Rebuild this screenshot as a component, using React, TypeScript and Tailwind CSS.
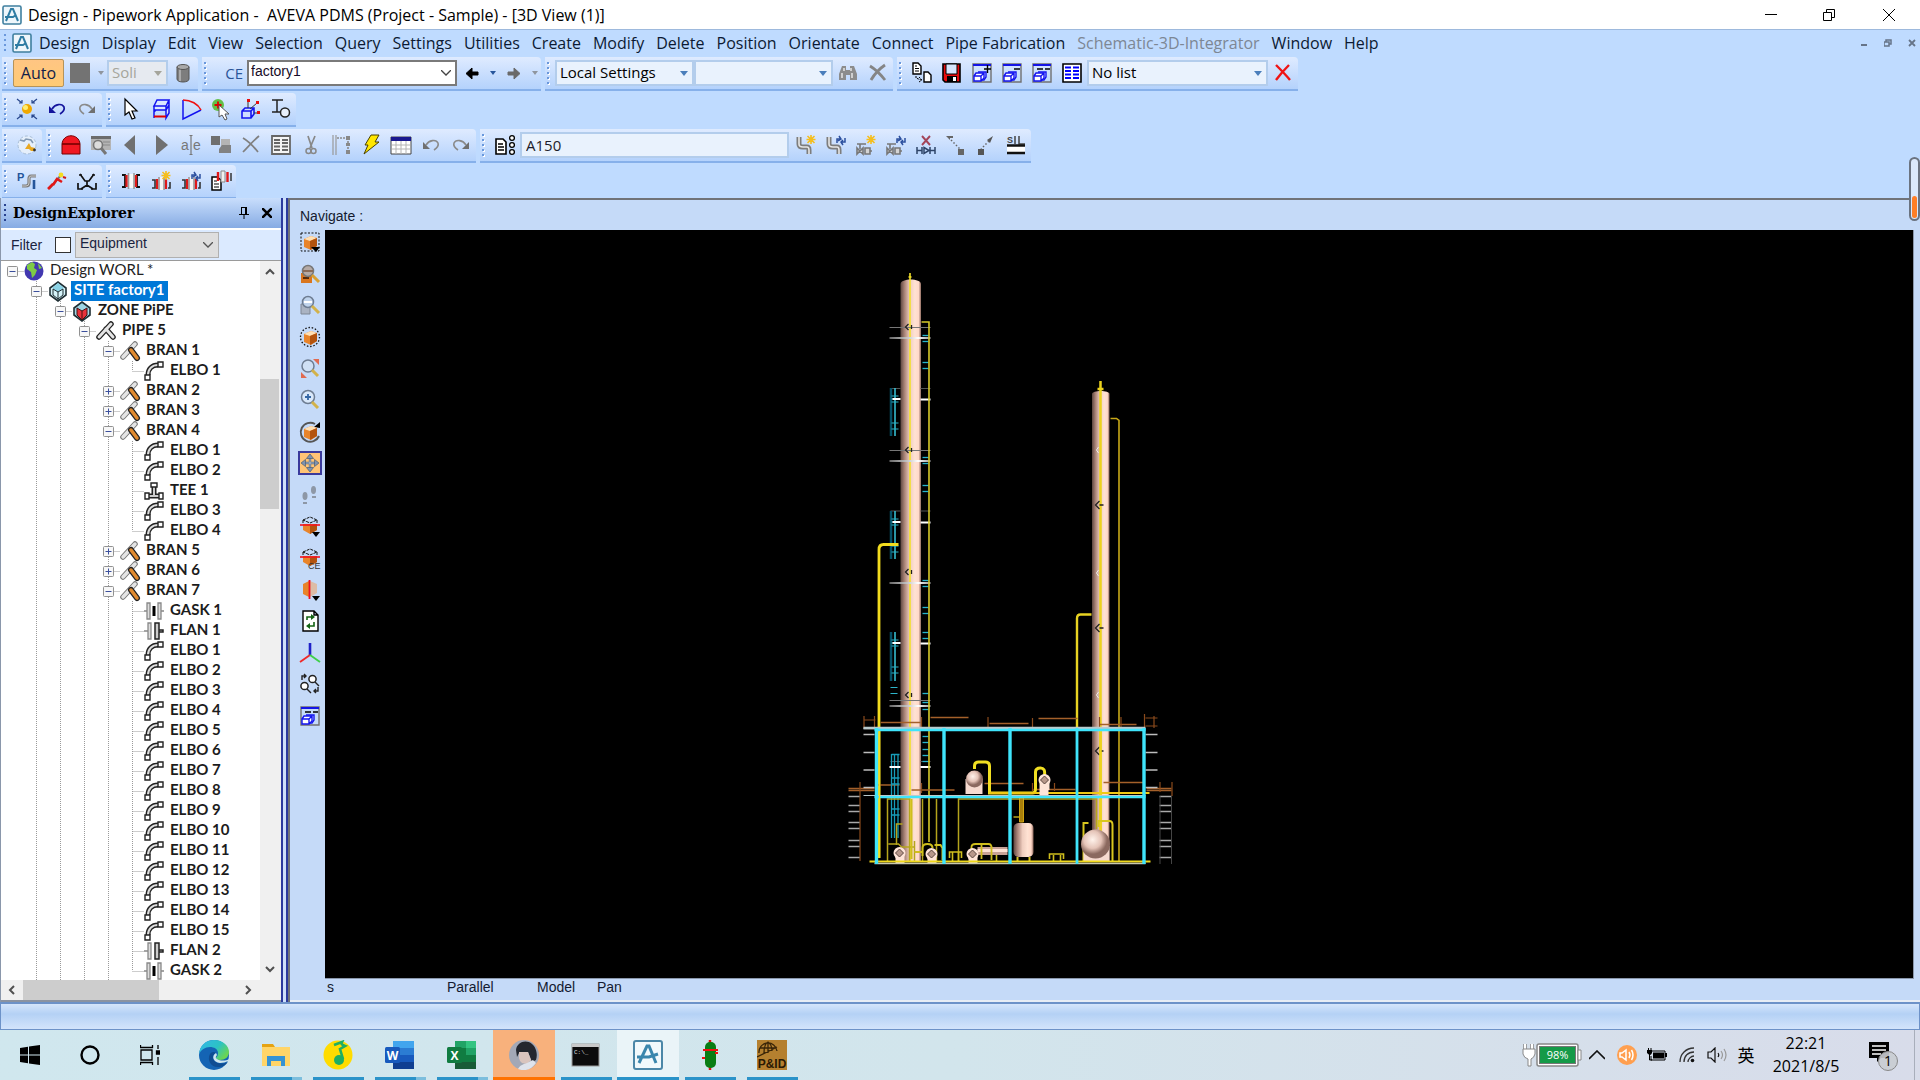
import type { ReactNode } from 'react';

type IconProps = {
  name: string;
  size?: 'sm' | 'md';
};

const cube = (
  <>
    <path d="M4 7l7-3 6 2v8l-6 4-7-3z" fill="#e8842a" />
    <path d="M4 7l7-3 6 2-7 3z" fill="#ffe0b5" />
    <path d="M10 9l7-3v8l-7 4z" fill="#b3530e" />
  </>
);

const halfCube = (
  <>
    <path d="M3 4l7-3 7 3-7 3zM3 4v4M17 4v4" stroke="#111" strokeDasharray="3 1" />
    <path d="M3 8h14v6l-7 4-7-4z" fill="#e8842a" />
    <path d="M10 10l7-2v6l-7 4z" fill="#b3530e" />
    <path d="M0 9h20" stroke="#f01020" strokeWidth="1.600" />
  </>
);

const spark = <path d="M15 0v9M10.500 4.500h9M11.500 1l7 7M18.500 1l-7 7" stroke="#f6be1c" strokeWidth="1.600" />;

const cycle = (
  <path d="M11 8V4h3M13 1l2 3-3 2M19 3v4h-4M17 10l-2-3 2-2" stroke="#2b4f9e" strokeWidth="1.500" />
);

const elbowPipe = (
  <>
    <path d="M3 2v7q0 3 4 3h4q2 0 2 3v4" stroke="#7d7d7d" strokeWidth="5" />
    <path d="M3 2v7q0 3 4 3h4q2 0 2 3v4" stroke="#e6e6e6" strokeWidth="1.600" />
  </>
);

const valve = (
  <>
    <path d="M1 13l6 6v-6l-6 6zM9 13h5v6H9z" fill="#d4d4d4" stroke="#777" strokeWidth="1.600" />
    <path d="M14 16h2M4 14V9M1 9h9" stroke="#777" strokeWidth="1.600" />
  </>
);

const drawlist = (
  <>
    <path d="M1 1h18v18H1z" stroke="#707070" strokeWidth="1.400" />
    <path d="M1 2h18" stroke="#1414e6" strokeWidth="2" />
    <path d="M6 9h8v5l-2 3H9" fill="#dce8ff" stroke="#1414f0" strokeWidth="1.400" />
    <path d="M2 13h7v5H2zM2 13l2-3h8v5l-3 3M9 13l3-3" fill="#fff" stroke="#1414f0" strokeWidth="1.400" />
  </>
);

const flange = (
  <>
    <path d="M8 6h5v13H8z" fill="#f4f4f4" />
    <path d="M8 6v13M13 6v13" stroke="#999" strokeWidth="1.600" />
    <path d="M6 8v10M15 8v10" stroke="#e01818" strokeWidth="2.200" />
    <path d="M1 9h3v8H1M19 11v6h-2" stroke="#333" strokeWidth="1.600" />
  </>
);

// All toolbar drawings share a 20x20 box
const icons: Record<string, ReactNode> = {
  aveva: (
    <>
      <rect x="1" y="1" width="18" height="18" rx="1.500" fill="#eef6fb" stroke="#3f7f9f" strokeWidth="1.600" />
      <path d="M4 16 9 4h2l5 12M3 12h8l3-2" stroke="#2f7ca3" strokeWidth="2" />
    </>
  ),
  square: <path d="M0 0h20v20H0z" fill="#737373" />,
  cylinder: (
    <>
      <path d="M4 4v12c0 4 12 4 12 0V4z" fill="#7d7d7d" stroke="#555" />
      <path d="M7 6v12" stroke="#aaa" strokeWidth="2" />
      <ellipse cx="10" cy="4" rx="6" ry="2.500" fill="#a8a8a8" stroke="#555" />
    </>
  ),
  back: <path d="M4 10.500 10 5v4h6v3h-6v4z" fill="#000" stroke="#000" />,
  forward: <path d="M16 10.500 10 5v4H4v3h6v4z" fill="#6a6a6a" stroke="#6a6a6a" />,
  binoculars: (
    <>
      <path d="M1 17V11l3-8h4v4h4V3h4l3 8v6h-7v-5H8v5z" fill="#8c8c8c" />
      <path d="M4 10v5M14 10v5M6 5v3M13 5v3" stroke="#e0e0e0" strokeWidth="1.600" />
    </>
  ),
  grayX: <path d="M2 3c5 3 11 9 15 14M17 2C11 6 6 12 3 17" stroke="#858585" strokeWidth="2.800" />,
  thinX: <path d="M2 3c5 3 11 9 15 14M18 1C12 6 7 12 2 17" stroke="#808080" strokeWidth="1.700" />,
  redX: <path d="M3 2c4 4 10 10 14 15M16 2C11 7 6 13 3 17" stroke="#f01414" strokeWidth="2.400" />,
  docCopy: (
    <>
      <path d="M1 0h5l3 3v8H1zM12 9h4l3 3v7h-7z" fill="#fff" stroke="#000" strokeWidth="1.400" />
      <path d="M3 3h2M3 5.500h4M3 8h4" stroke="#000" />
      <path d="M4 13v2l5 2M7 14l3 3-3 2" stroke="#000" strokeDasharray="2 1" />
    </>
  ),
  save: (
    <>
      <path d="M1 1h17v18H3l-2-2z" fill="#e80c0c" stroke="#000" strokeWidth="1.600" />
      <path d="M4 1h11v10H4z" fill="#d5e5fb" stroke="#000" />
      <path d="M5 13h10v6H5z" fill="#000" />
      <path d="M11 14h3v4h-3z" fill="#fff" />
    </>
  ),
  listAdd: (
    <>
      {drawlist}
      <path d="M12 6h7M15.500 2v8" stroke="#000" strokeWidth="1.400" />
    </>
  ),
  listRemove: (
    <>
      {drawlist}
      <path d="M12 6h6" stroke="#000" strokeWidth="1.500" />
    </>
  ),
  listClear: (
    <>
      {drawlist}
      <path d="M5 6h6M13 6h5" stroke="#000" strokeWidth="1.500" />
    </>
  ),
  listTable: (
    <>
      <path d="M1 1h18v18H1z" fill="#fff" stroke="#000" strokeWidth="1.600" />
      <path d="M3 4.500h6M11 4.500h6M3 8h6M11 8h6M3 11.500h6M11 11.500h6M3 15h6M11 15h6" stroke="#00f" strokeWidth="2.200" />
    </>
  ),
  target: (
    <>
      <circle cx="10" cy="10" r="5" fill="#f0a800" />
      <circle cx="8.500" cy="8.500" r="2.500" fill="#ffee70" />
      <path d="M0 0l5 4M5 1v3H2M20 0l-5 4M15 1v3h3M0 20l5-4M2 16h3v3M20 20l-5-4M18 16h-3v3" stroke="#27468c" strokeWidth="1.200" />
    </>
  ),
  undo: (
    <>
      <path d="M5 10C8 5 15 4 17 8c1 3-1 5-4 7" stroke="#14149c" strokeWidth="1.700" />
      <path d="M2 7v7h7z" fill="#14149c" />
    </>
  ),
  redo: (
    <>
      <path d="M15 10C12 5 5 4 3 8c-1 3 1 5 4 7" stroke="#8a8a8a" strokeWidth="1.600" />
      <path d="M18 7v7h-7z" fill="#707070" />
    </>
  ),
  undoGray: (
    <>
      <path d="M5 10C8 5 15 4 17 8c1 3-1 5-4 7" stroke="#8a8a8a" strokeWidth="1.600" />
      <path d="M2 7v7h7z" fill="#707070" />
    </>
  ),
  cursor: <path d="M4 0v16l4-3 3 7 3-1-3-7h5z" fill="#fff" stroke="#000" strokeWidth="1.200" />,
  box3d: (
    <>
      <path d="M3 7l3-6h12l-3 6zM3 7h12v4H3zM15 11l3-5V1M3 11v8M15 11v8l3-5V6M3 13l2-2" fill="#dbe8ff" stroke="#1414f0" strokeWidth="1.500" />
      <path d="M3 17.500h12" stroke="#e00000" strokeWidth="2" />
    </>
  ),
  sector: (
    <>
      <path d="M2 1v19l18-9" stroke="#1414f0" strokeWidth="1.500" />
      <path d="M2 1c8 0 15 4 18 10" stroke="#f01010" strokeWidth="1.600" />
    </>
  ),
  cursorAdd: (
    <>
      <circle cx="7" cy="6" r="6" fill="#62c048" />
      <path d="M3.500 6h7M7 2.500v7" stroke="#e00000" strokeWidth="1.800" />
      <path d="M8 6v12l3-2 3 5 2-1-2-5h4z" fill="#fff" stroke="#555" />
    </>
  ),
  axisBox: (
    <>
      <path d="M1 12l3-3h9v6l-3 4H1zM1 12h9v7M10 12l3-3" fill="#cfdcff" stroke="#1414f0" strokeWidth="1.600" />
      <path d="M7 9V2M9 10l7-6M13 14h5M10 16" stroke="#333" />
      <path d="M6 0h3v3H6zM15 2h3v3h-3zM16 12h3v3h-3z" fill="#e80c0c" />
    </>
  ),
  measure: (
    <>
      <path d="M1 1h11M6 1v12M1 13h9" stroke="#222" strokeWidth="1.500" />
      <circle cx="14" cy="13.500" r="4.500" fill="#e8f0fc" stroke="#222" strokeWidth="1.500" />
    </>
  ),
  globe: (
    <>
      <circle cx="10" cy="10" r="9" fill="#e5effb" stroke="#a9bed6" strokeDasharray="3 2" />
      <path d="M3 5l4 1 2-2 5 1 2 3" stroke="#8299b3" strokeWidth="1.600" />
      <path d="M8 14l4-6 2 4 4 1v3h-4l-2-2z" fill="#e9a820" />
      <circle cx="17.500" cy="15" r="1.400" fill="#333" />
    </>
  ),
  helmet: (
    <>
      <path d="M1 19V9C2-2 18-2 19 9v10z" fill="#f01822" stroke="#700" />
      <path d="M1 9h18" stroke="#700" strokeWidth="1.600" />
    </>
  ),
  search: (
    <>
      <path d="M0 1h20v14H0z" fill="#b4b4b4" />
      <path d="M0 2.500h20" stroke="#6c6c6c" strokeWidth="3" />
      <path d="M12 7h7M12 10h7" stroke="#8a8a8a" />
      <circle cx="7" cy="10" r="4.500" fill="#dcdcdc" stroke="#777" strokeWidth="1.600" />
      <path d="M10 13l5 6" stroke="#777" strokeWidth="3" />
    </>
  ),
  prev: <path d="M14 0v20L3 10z" fill="#707070" />,
  next: <path d="M5 0v20l12-10z" fill="#707070" />,
  rename: (
    <>
      <text x="0" y="15" fontSize="14" fill="#777" textAnchor="start" fontFamily="Liberation Sans">a</text>
      <text x="12" y="15" fontSize="14" fill="#777" fontFamily="Liberation Sans">e</text>
      <path d="M10 1v18M8.500 .5h3M8.500 19.500h3" stroke="#777" strokeWidth="1.200" />
    </>
  ),
  blocks: (
    <>
      <path d="M10 4h9v8h-9z" fill="#b4b4b4" />
      <path d="M0 1h9v9H0z" fill="#6f6f6f" />
      <path d="M11 10h9v8H8v-4z" fill="#828282" />
    </>
  ),
  list: (
    <>
      <path d="M1 1h18v18H1z" fill="#f4f4f4" stroke="#666" strokeWidth="1.800" />
      <path d="M3 5h6M11 5h6M3 8h6M11 8h6M3 11.500h6M11 11.500h6M3 15h6M11 15h6" stroke="#666" strokeWidth="2" />
    </>
  ),
  cut: (
    <>
      <path d="M7 1l4 12M14 1L9 13" stroke="#888" strokeWidth="1.700" />
      <circle cx="7.500" cy="16" r="2.500" stroke="#888" strokeWidth="1.500" />
      <circle cx="12.500" cy="16" r="2.500" stroke="#888" strokeWidth="1.500" />
    </>
  ),
  nodes: (
    <>
      <path d="M2 0v20M5 0v20" stroke="#999" strokeWidth="1.200" />
      <path d="M6 3h9M17 3v16" stroke="#8a8a8a" strokeWidth="1.600" strokeDasharray="2 1" />
      <path d="M15 1h4v4h-4zM15 8h4v3h-4zM15 15h4v4h-4z" fill="#888" />
    </>
  ),
  bolt: <path d="M10 0h8l-4 7h4L3 19l4-9H4z" fill="#ffe600" stroke="#4a4100" />,
  calendar: (
    <>
      <path d="M0 2h20v17H0z" fill="#fff" stroke="#444" />
      <path d="M0 2h20v4H0z" fill="#18188f" />
      <path d="M1 10h18M1 14h18M5 6v13M10 6v13M15 6v13" stroke="#b4b4b4" />
    </>
  ),
  docChain: (
    <>
      <path d="M1 4h7l3 3v12H1z" fill="#fff" stroke="#000" strokeWidth="1.600" />
      <path d="M3 9h5M3 12h6M3 15h6" stroke="#000" strokeWidth="1.300" />
      <circle cx="17" cy="3" r="2.400" fill="#fff" stroke="#000" strokeWidth="1.300" />
      <circle cx="17" cy="10" r="2.400" fill="#fff" stroke="#000" strokeWidth="1.300" />
      <circle cx="17" cy="17" r="2.400" fill="#fff" stroke="#000" strokeWidth="1.300" />
    </>
  ),
  pipeNew: <>{elbowPipe}{spark}</>,
  pipeCycle: <>{elbowPipe}{cycle}</>,
  valveNew: <>{valve}{spark}</>,
  valveCycle: <>{valve}{cycle}</>,
  valveDelete: (
    <>
      <path d="M6 1l8 9M14 1l-8 9" stroke="#a34458" strokeWidth="1.900" />
      <path d="M1 12v7M19 12v7M1 15.500h5M14 15.500h5M6 12v7M14 12v7M8 12.500l5 3-5 3z" stroke="#2e4468" strokeWidth="1.500" />
    </>
  ),
  routeDown: (
    <>
      <path d="M0 1h7v2H4v2zM12 14h6v6h-6z" fill="#666" />
      <path d="M5 5l9 9" stroke="#666" strokeWidth="1.500" strokeDasharray="1.500 2" />
    </>
  ),
  routeUp: (
    <>
      <path d="M17 1l-6 4 3 3zM2 14h6v6H2z" fill="#555" />
      <path d="M13 6l-8 8" stroke="#666" strokeWidth="1.500" strokeDasharray="1.500 2" />
    </>
  ),
  slope: (
    <>
      <text x="1" y="8" fontSize="9" fontWeight="bold" fill="#444" fontFamily="Liberation Sans">S</text>
      <path d="M9 1v8M13 1v8h6" stroke="#444" strokeWidth="1.500" />
      <path d="M1 11h18v7H1z" fill="#fff" />
      <path d="M1 10.500h18M1 18h18" stroke="#111" strokeWidth="2.400" />
    </>
  ),
  pipePi: (
    <>
      <text x="0" y="10" fontSize="11" fontWeight="bold" fill="#24559a" fontFamily="Liberation Sans">P</text>
      <path d="M19 5h-5q-2 0-2 3v4q0 3-3 3H5" stroke="#7d7d7d" strokeWidth="3.200" />
      <path d="M19 5h-5q-2 0-2 3v4q0 3-3 3H5" stroke="#c9c9c9" />
      <path d="M17 9v9" stroke="#24559a" strokeWidth="2.600" />
    </>
  ),
  redPen: (
    <>
      <path d="M2 18L15 3" stroke="#777" strokeWidth="2" />
      <path d="M1 18l5-5M6 14l4-6 5 3" stroke="#e01818" strokeWidth="2.600" />
      <circle cx="14" cy="4" r="2.400" fill="#f3dc20" />
      <path d="M16 6l3 1" stroke="#d01818" strokeWidth="2" />
    </>
  ),
  trim: (
    <>
      <path d="M3 3l5 7h4l5-7M2 4h3M15 4h3M10 10v4M4 18l6-4 6 4" stroke="#111" strokeWidth="1.700" />
      <path d="M1 12v6h5M19 12v6h-5" stroke="#111" strokeWidth="1.700" />
    </>
  ),
  flange: (
    <>
      <path d="M1 4h3v12H1M19 4h-3v12h3" stroke="#111" strokeWidth="1.800" />
      <path d="M8 3h5v14H8z" fill="#f8f8f8" />
      <path d="M7.500 2v16M13 2v16" stroke="#999" strokeWidth="1.600" />
      <path d="M5.500 4v12M15 4v12" stroke="#e01818" strokeWidth="2.200" />
    </>
  ),
  flangeNew: <>{flange}{spark}</>,
  flangeCycle: <>{flange}{cycle}</>,
  flangeDoc: (
    <>
      <path d="M1 6h5l4 3v10H1z" fill="#fff" stroke="#000" strokeWidth="1.500" />
      <path d="M3 10h3M3 13h5M3 16h5" stroke="#000" />
      <path d="M10 0h4v11h-4z" fill="#f0f0f0" stroke="#888" />
      <path d="M7 1v9M16.500 1v10" stroke="#e01818" strokeWidth="2.400" />
      <path d="M20 2v8" stroke="#333" strokeWidth="1.500" />
    </>
  ),
  cubeSelect: (
    <>
      <path d="M1 1h18v18H1z" stroke="#111" strokeDasharray="2 1.500" />
      {cube}
      <path d="M11 15h9l-4 5z" fill="#000" />
    </>
  ),
  zoomBox: (
    <>
      <path d="M1 9h11v10H1z" fill="#d9761f" />
      <path d="M3 14h6" stroke="#5a2a08" strokeWidth="2" />
      <circle cx="8" cy="7" r="5.500" fill="#b5aaa5" stroke="#777" strokeWidth="1.500" />
      <path d="M3 7h10" stroke="#8a6b58" strokeWidth="2" />
      <path d="M12 11l7 7" stroke="#d8a033" strokeWidth="3" />
    </>
  ),
  zoomItem: (
    <>
      <path d="M1 9h9v10H1z" fill="#aab3c2" stroke="#7f8795" />
      <circle cx="8" cy="7" r="5.500" fill="#bfd3ec" stroke="#6e7d92" strokeWidth="1.500" />
      <path d="M4 7h8" stroke="#fff" strokeWidth="2" />
      <path d="M12 11l7 7" stroke="#d2b24a" strokeWidth="3" />
    </>
  ),
  cubeRound: (
    <>
      <circle cx="10" cy="10" r="9.500" stroke="#111" strokeWidth="1.300" strokeDasharray="1.500 1.800" />
      {cube}
    </>
  ),
  zoomExtents: (
    <>
      <circle cx="8" cy="8" r="6" fill="#cfe0f5" stroke="#6e7d92" strokeWidth="1.500" />
      <path d="M12 12l6 6" stroke="#d2b24a" strokeWidth="3" />
      <path d="M13 1h6v6zM1 14v6h6z" fill="#e06a50" />
    </>
  ),
  zoomIn: (
    <>
      <circle cx="8" cy="7" r="6.500" fill="#d9e8fa" stroke="#6e7d92" strokeWidth="1.500" />
      <path d="M5 7h6M8 4v6" stroke="#3567a5" strokeWidth="1.800" />
      <path d="M12 12l6 6" stroke="#d2b24a" strokeWidth="3" />
    </>
  ),
  rotate: (
    <>
      <path d="M15 2A9.500 9.500 0 1 0 19 14" stroke="#555" strokeWidth="2" />
      <path d="M14 5l6-5v6z" fill="#000" />
      {cube}
    </>
  ),
  pan: (
    <>
      <path d="M10 2v16M2 10h16" stroke="#55677f" strokeWidth="2.600" />
      <path d="M10 2v16M2 10h16" stroke="#c9d6e6" strokeWidth=".8" />
      <path d="M10 0l4 5H6zM10 20l4-5H6zM0 10l5-4v8zM20 10l-5-4v8z" fill="#7d93b0" stroke="#44546a" strokeWidth=".7" />
    </>
  ),
  walk: (
    <>
      <ellipse cx="5" cy="11" rx="2.500" ry="4" fill="#8d97a6" />
      <ellipse cx="13.500" cy="5" rx="2.500" ry="4" fill="#8d97a6" />
      <path d="M3 17h4v2H3zM12 11h4v2h-4z" fill="#8d97a6" />
    </>
  ),
  clip: (
    <>
      {halfCube}
      <path d="M12 16h8l-4 5z" fill="#000" />
    </>
  ),
  clipCe: (
    <>
      {halfCube}
      <text x="8" y="21" fontSize="9" fill="#333" fontFamily="Liberation Sans">CE</text>
    </>
  ),
  clipSide: (
    <>
      <path d="M3 4l6-3v16l-6-3z" fill="#e8842a" />
      <path d="M10 1l7 3v9l-7 4z" fill="#dcbca6" />
      <path d="M9.500 0v19" stroke="#f01020" strokeWidth="1.800" />
      <path d="M12 16h8l-4 5z" fill="#000" />
    </>
  ),
  refresh: (
    <>
      <path d="M3 0h11l4 4v16H3zM14 0v4h4" fill="#fff" stroke="#000" strokeWidth="1.400" />
      <path d="M7 9V6h4M14 11v4h-4" stroke="#146414" strokeWidth="1.600" />
      <path d="M11 3l4 3-4 3zM10 12l-4 3 4 3z" fill="#146414" />
    </>
  ),
  axes: (
    <>
      <path d="M10 12V0" stroke="#2020c8" strokeWidth="2.600" />
      <path d="M10 12L0 19" stroke="#f02828" strokeWidth="1.900" />
      <path d="M10 12l10 7" stroke="#3fcf4a" strokeWidth="1.900" />
    </>
  ),
  zoomCycle: (
    <>
      <circle cx="12.500" cy="5" r="3.600" fill="#fff" stroke="#222" strokeWidth="1.500" />
      <circle cx="4.500" cy="12" r="3.600" fill="#fff" stroke="#222" strokeWidth="1.500" />
      <path d="M15 8l4 4M7 15l4 4M2 6V2h4M4 0l2 2-2 2M18 13v4h-4M16 15l-2 2 2 2" stroke="#222" strokeWidth="1.400" />
    </>
  ),
  world: (
    <>
      <circle cx="10" cy="10" r="9.500" fill="#4238b0" />
      <path d="M3 4l5-3 3 2-1 4 3 2-2 5-3 3-1-6-4-3z" fill="#7ecb45" />
      <path d="M14 2l4 5-3 1z" fill="#7ecb45" />
    </>
  ),
  site: (
    <>
      <path d="M2 7l8-6 8 6v7l-8 6-8-6z" fill="#d6f4fa" stroke="#1f2e33" strokeWidth="1.600" />
      <path d="M10 2l6 5-6 4-6-4z" fill="#8bd3e6" />
      <path d="M10 11L5 8v6l5 4 5-4V8zM10 11v8" stroke="#1f2e33" />
    </>
  ),
  zone: (
    <>
      <path d="M2 7l8-6 8 6v7l-8 6-8-6z" fill="#9fd6e4" stroke="#1f2e33" strokeWidth="1.600" />
      <path d="M10 10L5 7v7l5 5 5-5V7z" fill="#e8323a" stroke="#4a1010" />
      <path d="M10 10v9" stroke="#4a1010" />
    </>
  ),
  pipe: (
    <>
      <path d="M3 16L15 3M10 8l7 8" stroke="#222" strokeWidth="5.500" strokeLinecap="round" />
      <path d="M3 16L15 3M10 8l7 8" stroke="#e4e4e4" strokeWidth="3" strokeLinecap="round" />
    </>
  ),
  bran: (
    <>
      <path d="M3 16L15 3" stroke="#777" strokeWidth="5.500" strokeLinecap="round" />
      <path d="M3 16L15 3" stroke="#e4e4e4" strokeWidth="3.500" strokeLinecap="round" />
      <path d="M11 9l6 8" stroke="#222" strokeWidth="6" strokeLinecap="round" />
      <path d="M11 9l6 8" stroke="#e08a30" strokeWidth="3.500" strokeLinecap="round" />
    </>
  ),
  elbo: (
    <>
      <path d="M4 14C4 8 8 4 14 4" stroke="#222" strokeWidth="5" />
      <path d="M4 14C4 8 8 4 14 4" stroke="#ddd" strokeWidth="2" />
      <path d="M1 14h5v5H1zM14 1h5v5h-5z" fill="#fff" stroke="#222" strokeWidth="1.400" />
    </>
  ),
  tee: (
    <>
      <path d="M4 15h12M10 15V6" stroke="#222" strokeWidth="5" />
      <path d="M4 15h12M10 15V6" stroke="#ccc" strokeWidth="2" />
      <path d="M1 12h4v6H1zM15 12h4v6h-4zM7 2h6v4H7z" fill="#fff" stroke="#222" strokeWidth="1.400" />
    </>
  ),
  gask: (
    <>
      <path d="M0 10h3V2h3v16H3v-8M20 10h-3V2h-3v16h3v-8" fill="#ddd" stroke="#888" strokeWidth="1.300" />
      <path d="M10 5v10" stroke="#000" strokeWidth="3" />
    </>
  ),
  flan: (
    <>
      <path d="M0 10h4V2h3v16H4v-8" fill="#ddd" stroke="#888" strokeWidth="1.300" />
      <path d="M11 2h4v16h-4zM15 9h4v2h-4" fill="#ccc" stroke="#222" strokeWidth="1.500" />
    </>
  ),
};

const sizes = { sm: 'size-[18px]', md: 'size-5' };

function Icon({ name, size = 'md' }: IconProps) {
  return (
    <svg viewBox="0 0 20 20" fill="none" className={`${sizes[size]} shrink-0 overflow-visible`} aria-hidden="true">
      {icons[name]}
    </svg>
  );
}

function Tool({ icon, label }: { icon: string; label: string }) {
  return (
    <button type="button" aria-label={label} className="flex h-full w-[30px] shrink-0 items-center justify-center">
      <Icon name={icon} />
    </button>
  );
}

function Arrow({ color = '#27569c', label }: { color?: string; label: string }) {
  return (
    <button type="button" aria-label={label} className="flex w-3 shrink-0 justify-center">
      <svg viewBox="0 0 6 4" className="h-1 w-1.5">
        <path d="M0 0h6L3 4z" fill={color} />
      </svg>
    </button>
  );
}

function Bar({ children }: { children: ReactNode }) {
  return (
    <div className="flex h-[34px] items-center rounded-tr border-b-2 border-[#86b0ea] bg-linear-to-b from-[#dfebff] to-[#b4d2fc]">
      <svg viewBox="0 0 10 26" className="h-[26px] w-2.5 shrink-0">
        {[2, 7, 12, 17, 22].map((y) => (
          <g key={y}>
            <path d={`M3 ${y + 1}h2v2H3z`} fill="#fff" />
            <path d={`M2 ${y}h2v2H2z`} fill="#6a98dc" />
          </g>
        ))}
      </svg>
      {children}
    </div>
  );
}

type ComboProps = {
  label: string;
  value: string;
  width: string;
  disabled?: boolean;
};

function Combo({ label, value, width, disabled }: ComboProps) {
  return (
    <div className={`relative shrink-0 ${width}`}>
      <select
        aria-label={label}
        disabled={disabled}
        className="block h-[26px] w-full appearance-none border-2 border-[#b3cdec] bg-[#e9f2fd] pb-px pl-[3px] text-[15px] leading-[21px] text-black disabled:bg-[#e6eaf0] disabled:text-[#a5a59b]"
      >
        <option>{value}</option>
      </select>
      <svg viewBox="0 0 8 5" className="pointer-events-none absolute top-[11px] right-1.5 h-[5px] w-2">
        <path d="M0 0h8L4 5z" fill={disabled ? '#a5a59b' : '#4a7ebb'} />
      </svg>
    </div>
  );
}

const menus = [
  'Design', 'Display', 'Edit', 'View', 'Selection', 'Query', 'Settings', 'Utilities', 'Create', 'Modify', 'Delete',
  'Position', 'Orientate', 'Connect', 'Pipe Fabrication', 'Schematic-3D-Integrator', 'Window', 'Help',
];

function TitleBar() {
  return (
    <header className="flex h-[29px] shrink-0 items-center bg-white pl-0.5">
      <Icon name="aveva" />
      <h1 className="ml-1.5 flex-1 text-base leading-5 whitespace-pre text-black">
        {'Design - Pipework Application -  AVEVA PDMS (Project - Sample) - [3D View (1)]'}
      </h1>
      <button type="button" aria-label="Minimize" className="flex w-[58px] justify-center">
        <svg viewBox="0 0 12 12" className="size-3"><path d="M0 5.500h12" stroke="#000" /></svg>
      </button>
      <button type="button" aria-label="Restore" className="flex w-[58px] justify-center">
        <svg viewBox="0 0 12 12" className="size-3" fill="none" stroke="#000">
          <path d="M.5 3.500h8v8h-8zM3.500 3V.5h8v8H9" />
        </svg>
      </button>
      <button type="button" aria-label="Close" className="flex w-[62px] justify-center">
        <svg viewBox="0 0 12 12" className="size-3" stroke="#000"><path d="M0 0l12 12M12 0L0 12" /></svg>
      </button>
    </header>
  );
}

function MenuBar() {
  return (
    <nav className="flex h-7 shrink-0 items-center border-t border-[#9db9dd] pb-px pl-1">
      <svg viewBox="0 0 8 18" className="h-[18px] w-2">
        {[0, 5, 10, 15].map((y) => (
          <path key={y} d={`M0 ${y}h2v2H0z`} fill="#6a98dc" />
        ))}
      </svg>
      <Icon name="aveva" />
      <ul className="ml-px flex flex-1 text-base leading-5 text-[#0c1a33]">
        {menus.map((menu) => (
          <li key={menu}>
            <button
              type="button"
              disabled={menu.startsWith('Schematic')}
              className="px-1.5 whitespace-nowrap disabled:text-[#7d8794]"
            >
              {menu}
            </button>
          </li>
        ))}
      </ul>
      <div className="flex items-center gap-4 pr-1">
        <button type="button" aria-label="Minimize view">
          <svg viewBox="0 0 8 8" className="size-2"><path d="M1 6h6" stroke="#667488" strokeWidth="2" /></svg>
        </button>
        <button type="button" aria-label="Restore view">
          <svg viewBox="0 0 8 8" className="size-2" fill="none" stroke="#667488">
            <path d="M0 3h5v4H0zM2 3V1h5v4H5" strokeWidth="1.500" />
          </svg>
        </button>
        <button type="button" aria-label="Close view">
          <svg viewBox="0 0 8 8" className="size-2" stroke="#667488"><path d="M1 1l6 6M7 1L1 7" strokeWidth="1.800" /></svg>
        </button>
      </div>
    </nav>
  );
}

function Toolbars() {
  return (
    <div className="flex h-[141px] shrink-0 flex-col gap-0.5 pl-0.5">
      <div className="flex gap-1">
        <Bar>
          <button
            type="button"
            className="mx-px h-7 w-[51px] shrink-0 rounded-xs border border-[#b5935a] bg-linear-to-b from-[#ffc583] to-[#ffcb74] text-base leading-5 text-[#10204a]"
          >
            Auto
          </button>
          <Tool icon="square" label="Colour" />
          <Arrow color="#8f959e" label="Colour options" />
          <Combo label="Representation" value="Soli" width="w-[61px]" disabled />
          <Tool icon="cylinder" label="Primitive" />
        </Bar>
        <Bar>
          <label htmlFor="ce" className="w-[35px] shrink-0 pr-1 text-right text-[15px] text-[#2a5598]">CE</label>
          <div className="relative w-[210px] shrink-0">
            <select
              id="ce"
              className="block h-[26px] w-full appearance-none border-2 border-[#7a7a7a] bg-white pb-1 pl-0.5 font-['Liberation_Sans',sans-serif] text-sm leading-[18px] text-[#160b28]"
            >
              <option>factory1</option>
            </select>
            <svg viewBox="0 0 10 6" className="pointer-events-none absolute top-2.5 right-1.5 h-1.5 w-2.5">
              <path d="M0 0l5 5 5-5" fill="none" stroke="#444" strokeWidth="1.300" />
            </svg>
          </div>
          <Tool icon="back" label="Back" />
          <Arrow label="Back history" />
          <Tool icon="forward" label="Forward" />
          <Arrow color="#8f959e" label="Forward history" />
        </Bar>
        <Bar>
          <Combo label="Settings" value="Local Settings" width="w-[139px]" />
          <Combo label="Find" value="" width="w-[139px]" />
          <Tool icon="binoculars" label="Search" />
          <Tool icon="grayX" label="Clear search" />
        </Bar>
        <Bar>
          <Tool icon="docCopy" label="Copy to list" />
          <Tool icon="save" label="Save" />
          <Tool icon="listAdd" label="Add to list" />
          <Tool icon="listRemove" label="Remove from list" />
          <Tool icon="listClear" label="Clear list" />
          <Tool icon="listTable" label="Lists" />
          <Combo label="List" value="No list" width="w-[181px]" />
          <Tool icon="redX" label="Delete list" />
        </Bar>
      </div>
      <div className="flex gap-1">
        <Bar>
          <Tool icon="target" label="Centre" />
          <Tool icon="undo" label="Undo" />
          <Tool icon="redo" label="Redo" />
        </Bar>
        <Bar>
          <Tool icon="cursor" label="Select" />
          <Tool icon="box3d" label="Box" />
          <Tool icon="sector" label="Sector" />
          <Tool icon="cursorAdd" label="Add selection" />
          <Tool icon="axisBox" label="Model editor" />
          <Tool icon="measure" label="Measure" />
        </Bar>
      </div>
      <div className="flex gap-1">
        <Bar>
          <Tool icon="globe" label="Workspace" />
        </Bar>
        <Bar>
          <Tool icon="helmet" label="Safety" />
          <Tool icon="search" label="Find element" />
          <Tool icon="prev" label="Previous" />
          <Tool icon="next" label="Next" />
          <Tool icon="rename" label="Rename" />
          <Tool icon="blocks" label="Hierarchy" />
          <Tool icon="thinX" label="Delete" />
          <Tool icon="list" label="Attributes" />
          <Tool icon="cut" label="Cut" />
          <Tool icon="nodes" label="Nodes" />
          <Tool icon="bolt" label="Run" />
          <Tool icon="calendar" label="Table" />
          <Tool icon="undoGray" label="Undo modification" />
          <Tool icon="redo" label="Redo modification" />
        </Bar>
        <Bar>
          <Tool icon="docChain" label="Specification" />
          <input
            aria-label="Specification name"
            defaultValue="A150"
            className="mr-0.5 h-[26px] w-[269px] shrink-0 border-2 border-[#b3cdec] bg-[#e9f2fd] pl-1 text-[15px] text-[#1d1d2b]"
          />
          <Tool icon="pipeNew" label="Create pipe" />
          <Tool icon="pipeCycle" label="Modify pipe" />
          <Tool icon="valveNew" label="Create component" />
          <Tool icon="valveCycle" label="Modify component" />
          <Tool icon="valveDelete" label="Delete component" />
          <Tool icon="routeDown" label="Route down" />
          <Tool icon="routeUp" label="Route up" />
          <Tool icon="slope" label="Slope" />
        </Bar>
      </div>
      <div className="flex gap-1">
        <Bar>
          <Tool icon="pipePi" label="Pipe split" />
          <Tool icon="redPen" label="Pipe edit" />
          <Tool icon="trim" label="Trim" />
        </Bar>
        <Bar>
          <Tool icon="flange" label="Flange" />
          <Tool icon="flangeNew" label="New flange" />
          <Tool icon="flangeCycle" label="Modify flange" />
          <Tool icon="flangeDoc" label="Flange report" />
        </Bar>
      </div>
    </div>
  );
}

type TreeNode = {
  label: string;
  icon: string;
  depth: number;
  open?: boolean;
  selected?: boolean;
};

const leaf = (label: string): TreeNode => ({ label, icon: label.split(' ')[0].toLowerCase(), depth: 5 });
const bran = (n: number, open: boolean): TreeNode => ({ label: `BRAN ${n}`, icon: 'bran', depth: 4, open });

const nodes: TreeNode[] = [
  { label: 'Design WORL *', icon: 'world', depth: 0, open: true },
  { label: 'SITE factory1', icon: 'site', depth: 1, open: true, selected: true },
  { label: 'ZONE PiPE', icon: 'zone', depth: 2, open: true },
  { label: 'PIPE 5', icon: 'pipe', depth: 3, open: true },
  bran(1, true),
  leaf('ELBO 1'),
  bran(2, false),
  bran(3, false),
  bran(4, true),
  ...['ELBO 1', 'ELBO 2', 'TEE 1', 'ELBO 3', 'ELBO 4'].map(leaf),
  bran(5, false),
  bran(6, false),
  bran(7, true),
  ...['GASK 1', 'FLAN 1'].map(leaf),
  ...Array.from({ length: 15 }, (_, i) => leaf(`ELBO ${i + 1}`)),
  ...['FLAN 2', 'GASK 2'].map(leaf),
];

function TreeRow({ node, last }: { node: TreeNode; last: boolean }) {
  const { label, icon, depth, open, selected } = node;
  const width = 24 * depth + 23;
  const x = 24 * depth + 11.5;
  const isLeaf = open === undefined;

  return (
    <li className="flex h-5 items-center">
      <svg width={width} height="20" className="shrink-0" stroke="#9a9a9a" fill="none">
        {Array.from({ length: depth }, (_, i) => i)
          .filter((i) => i > 0)
          .map((i) => (
            <path key={i} d={`M${24 * i + 11.5} 0v20`} strokeDasharray="1 1" />
          ))}
        {depth > 0 && <path d={`M${x} 0v${isLeaf && last ? 10 : 20}`} strokeDasharray="1 1" />}
        <path d={`M${x} 10.500H${width}`} strokeDasharray="1 1" />
        {!isLeaf && (
          <g>
            <rect x={x - 5} y="5.500" width="10" height="10" rx="1" fill="#f7f7f7" stroke="#919191" />
            <path d={`M${x - 3} 10.500h6`} stroke="#3b4f9c" />
            {!open && <path d={`M${x} 7.500v6`} stroke="#3b4f9c" />}
          </g>
        )}
      </svg>
      <Icon name={icon} />
      <button
        type="button"
        className={`ml-[3px] h-5 px-[3px] pb-1 leading-4 whitespace-nowrap ${
          depth === 0 ? 'text-[#222]' : 'font-bold'
        } ${selected ? 'bg-[#0078d7] text-white' : 'text-[#1c1c1c]'}`}
      >
        {label}
      </button>
    </li>
  );
}

function Chevron({ d, className = '' }: { d: string; className?: string }) {
  return (
    <svg viewBox="0 0 10 10" className={`size-2.5 ${className}`} fill="none" stroke="#505050" strokeWidth="2">
      <path d={d} />
    </svg>
  );
}

function Explorer() {
  return (
    <aside className="flex w-[281px] shrink-0 flex-col border-l border-[#8a97ab] bg-white">
      <div className="flex h-[30px] shrink-0 items-center bg-linear-to-b from-[#c9defc] to-[#86abe3] pl-[3px]">
        <svg viewBox="0 0 9 18" className="h-[18px] w-[9px]">
          {[0, 5, 10, 15].map((y) => (
            <path key={y} d={`M0 ${y}h2v2H0z`} fill="#27418f" />
          ))}
        </svg>
        <h2 className="flex-1 font-['DejaVu_Serif',serif] text-sm font-bold text-black">DesignExplorer</h2>
        <button type="button" aria-label="Pin" className="flex w-[22px] justify-center">
          <svg viewBox="0 0 10 12" className="h-3 w-2.5" fill="none" stroke="#000">
            <path d="M2.500 0v7M7.500 0v7M6.500 0v7M2 .5h6M0 7.500h10M5 8v4" />
          </svg>
        </button>
        <button type="button" aria-label="Close explorer" className="mr-0.5 flex w-6 justify-center">
          <svg viewBox="0 0 10 10" className="size-2.5" stroke="#000" strokeWidth="2.500"><path d="M0 0l10 10M10 0L0 10" /></svg>
        </button>
      </div>
      <div className="flex h-8 shrink-0 items-center border-t-2 border-white bg-[#dbeaff] pl-2.5 font-['Liberation_Sans',sans-serif] text-sm text-[#1a2340]">
        <label htmlFor="filter" className="w-11">Filter</label>
        <input
          id="filter"
          type="checkbox"
          className="size-4 appearance-none border border-[#333] bg-white"
        />
        <div className="relative ml-1 w-[144px]">
          <select
            aria-label="Filter type"
            className="block h-[26px] w-full appearance-none border border-[#b0b0b0] bg-[#dedede] pb-1 pl-1 leading-5"
          >
            <option>Equipment</option>
          </select>
          <svg viewBox="0 0 10 6" className="pointer-events-none absolute top-2.5 right-1.5 h-1.5 w-2.5">
            <path d="M0 0l5 5 5-5" fill="none" stroke="#555" strokeWidth="1.300" />
          </svg>
        </div>
      </div>
      <div className="flex min-h-0 flex-1 border-t border-[#9a9a9a]">
        <ul className="min-w-0 flex-1 overflow-hidden font-[Lato,sans-serif] text-[15px]">
          {nodes.map((node, i) => (
            <TreeRow key={i} node={node} last={nodes[i + 1]?.depth !== 5} />
          ))}
        </ul>
        <div className="flex w-[19px] shrink-0 flex-col items-center bg-[#f0f0f0] py-1.5">
          <Chevron d="M1 7l4-4 4 4" />
          <div className="mt-[102px] h-[130px] w-full bg-[#cdcdcd]" />
          <Chevron d="M1 3l4 4 4-4" className="mt-auto" />
        </div>
        <div className="w-0.5 bg-[#f0f0f0]" />
      </div>
      <div className="flex h-[22px] shrink-0 items-center border-b-2 border-[#8b93a1] bg-[#f0f0f0] pr-7 pl-1.5">
        <Chevron d="M7 1L3 5l4 4" />
        <div className="ml-1.5 h-full w-[136px] bg-[#cdcdcd]" />
        <Chevron d="M3 1l4 4-4 4" className="ml-auto" />
      </div>
    </aside>
  );
}

const viewTools = [
  ['cubeSelect', 'Limits'], ['zoomBox', 'Zoom to selection'], ['zoomItem', 'Zoom to element'], ['cubeRound', 'Drawlist limits'],
  ['zoomExtents', 'Zoom extents'], ['zoomIn', 'Zoom'], ['rotate', 'Rotate'], ['pan', 'Pan'], ['walk', 'Walk'],
  ['clip', 'Clip'], ['clipCe', 'Clip element'], ['clipSide', 'Clip side'], ['refresh', 'Refresh'], ['axes', 'Axes'],
  ['zoomCycle', 'Cycle views'], ['listClear', 'Drawlist'],
];

// Side ladders, one per platform level
function Ladder({ y, h }: { y: number; h: number }) {
  return (
    <g>
      <path d={`M891.500 ${y}v${h}`} stroke="#055066" strokeWidth="2.500" />
      <path d={`M895.500 ${y}v${h}`} stroke="#38c8dc" strokeWidth="1.500" />
      <path d={`M892 ${y + 8}h7M892 ${y + 11}h7M892 ${y + 14}h7M892 ${y + 35}h7M892 ${y + 41}h7`} stroke="#2cb4ca" />
      <path d={`M893 ${y + 11}h8M921 ${y + 11.5}h10`} stroke="#fff" strokeWidth="2" />
    </g>
  );
}

function Pump({ x, y }: { x: number; y: number }) {
  return (
    <g>
      <path d={`M${x - 4} ${y}h9v10h-9z`} fill="#ffe4d8" />
      <circle cx={x} cy={y} r="6" fill="#ffe4d8" />
      <path d={`M${x} ${y - 4}l4 4-4 4-4-4z`} fill="#b8978b" stroke="#5b4640" />
    </g>
  );
}

function PlantModel() {
  return (
    <svg viewBox="326 230 1587 748" className="size-full" fill="none" role="img" aria-label="3D plant model">
      <defs>
        <linearGradient id="shell">
          <stop offset="0" stopColor="#5d4640" />
          <stop offset=".2" stopColor="#a98478" />
          <stop offset=".45" stopColor="#efcdbf" />
          <stop offset=".7" stopColor="#ffe2d3" />
          <stop offset=".88" stopColor="#ffd9c9" />
          <stop offset="1" stopColor="#8f6a5e" />
        </linearGradient>
        <radialGradient id="ball" cx=".4" cy=".35">
          <stop offset="0" stopColor="#fff3ec" />
          <stop offset=".6" stopColor="#e5c4b8" />
          <stop offset="1" stopColor="#8b695f" />
        </radialGradient>
        <linearGradient id="deck">
          <stop offset="0" stopColor="#666" />
          <stop offset=".7" stopColor="#fff" />
          <stop offset="1" stopColor="#999" />
        </linearGradient>
      </defs>

      {/* process columns */}
      <path d="M901 861V284c0-6 20.500-6 20.500 0v577z" fill="url(#shell)" />
      <path d="M1092.500 861V394c0-4 17.500-4 17.500 0v467z" fill="url(#shell)" />
      <path d="M910.500 273v588M909 277h3" stroke="#f3e22a" strokeWidth="1.600" />
      <path d="M1101 381v452M1098 389h6" stroke="#ecd21d" strokeWidth="2.500" />

      {/* platforms */}
      {[327, 450, 700].map((y) => <path key={y} d={`M890 ${y}h41v1h-41z`} fill="#777" />)}
      {[337, 460, 582, 705].map((y) => <path key={y} d={`M890 ${y}h41v2h-41z`} fill="url(#deck)" />)}
      <path d="M891 388.500h10M921 388.500h10M891 511h10M921 511h10M891 761.500h10M921 761.500h10" stroke="#555" />
      <path d="M921 767h10" stroke="#fff" strokeWidth="2" />
      <Ladder y={388} h={48} />
      <Ladder y={511} h={48} />
      <Ladder y={632} h={49} />
      <path d="M891 687.500h7M891 693.500h7" stroke="#2cb4ca" />
      {[335, 341, 362, 368, 457, 463, 485, 491, 580, 586, 607, 613, 632, 638, 693, 702, 709, 736, 742, 749, 755, 761].map((y) => (
        <path key={y} d={`M923 ${y}.5h6`} stroke="#27b5cc" strokeWidth="1.300" />
      ))}
      {[327, 450, 572, 695].map((y) => (
        <path key={y} d={`M909 ${y - 3}l-3 3 3 3M912 ${y - 2}v4`} stroke="#222" strokeWidth="1.300" />
      ))}
      {[505, 628, 751].map((y) => (
        <path key={y} d={`M1100 ${y - 4}l-4 4 4 4M1100 ${y}h4`} stroke="#222" strokeWidth="1.300" />
      ))}
      {[450, 573, 695].map((y) => <path key={y} d={`M1099 ${y - 3}l-2 3 2 3`} stroke="#eee" />)}

      {/* risers */}
      <path d="M899 544.500h-15q-4.500 0-4.500 5V858" stroke="#f2dc1e" strokeWidth="2.800" />
      <path d="M922 322h7.500v520" stroke="#d6c928" strokeWidth="1.600" />
      <path d="M1092 614.500h-11q-3.500 0-3.500 4V728" stroke="#e8d322" strokeWidth="2.400" />
      <path d="M1111 418.500h6l2.500 2V861" stroke="#c7a818" strokeWidth="1.600" />

      {/* handrails */}
      <path d="M881 722.500h40M931 717.500h38M990 723.500h39M1039 718.500h39M1100 724.500h37M849 788.500h26M849 790.500h26M912 790h43M985 783.500h39M1104 782.500h40M1034 789.500h42M879 785h21M1147 788.500h25M1147 790.500h25" stroke="#a4602a" strokeWidth="1.300" />
      <path d="M864.500 716v12M864 720h12M875 716v12M922 717v12M988.500 717v10M1033 718v10M1100 717v10M1121.500 717v10M1145 714v14M1154.500 716v12M1146 718h12M1146 726h12M860.500 782v79M922 783v10M1033 783v8M1055 783v8M1160.500 782v10M1172.500 782v14" stroke="#8a4a1c" strokeWidth="1.200" />

      {/* access ladders */}
      <path d="M864 728.500h14M864 734.500h11M864 752.500h11M864 770h11M864 787.500h11M1146 734.500h12M1146 752.500h12M1146 770h12M1146 787.500h12" stroke="#bdbdbd" strokeWidth="1.600" />
      {[796, 805, 811, 822, 828, 840, 846, 857].map((y) => (
        <path key={y} d={`M849 ${y}.5h11M1160 ${y}.5h12`} stroke="#a9a9a9" strokeWidth="1.500" />
      ))}
      <path d="M1160.500 796v68M1172 796v68" stroke="#444" />

      {/* lower ladder */}
      <path d="M892 754v84M895 754v84M898.500 754v84M892 754.500h8M892 778h8M892 784h8M892 809h8M892 815h8" stroke="#169cb8" strokeWidth="1.300" />
      <path d="M890 767h11" stroke="#fff" strokeWidth="2" />

      {/* upper floor equipment */}
      <path d="M966 779h17v15h-17z" fill="#f6dacf" />
      <path d="M975 769v-3q0-4 4-4h7q4 0 4 4v27h43q3 0 3-4v-17q0-4 5-4t4 7" stroke="#f1df22" strokeWidth="3" />
      <circle cx="975" cy="779" r="8.500" fill="url(#ball)" />
      <path d="M990 793h111M1101 793h49" stroke="#f0c814" strokeWidth="2" />
      <path d="M1101 730v100" stroke="#ecd21d" strokeWidth="2.500" />
      <path d="M1040 782h9v13h-9z" fill="#ffe4d8" />
      <Pump x={1045} y={780} />

      {/* ground floor piping */}
      <path d="M888 861v-62h22v62M889 844h10l3 3h13v14M897 845v-21h6M915 861v-20M923 861v-62M937 861v-62M959 861v-62h138v30M1014 817h10" stroke="#b5a51c" strokeWidth="1.500" />
      <path d="M912 799v60M923 856v-8q0-4 5-4t5 4M935 845h6l2 3v12M915 852h8" stroke="#cfbe1d" strokeWidth="2" />
      <path d="M1020 798h4v24h-4z" fill="#a87f0b" stroke="#d1a410" />
      <path d="M1084 861v-38h5M1108 821h-9v6M1098 821h12q3 0 3 4v36" stroke="#d8c61f" strokeWidth="2" />
      <path d="M950 858v-6h12v6M953 852v10M959 852v10M1050 859v-5h14v5M1054 855v6M1061 855v6M985 853h12v8" stroke="#cfbe1d" strokeWidth="1.600" />
      <rect x="978" y="847" width="30" height="8" fill="#c9a396" />
      <rect x="978" y="849" width="30" height="3" fill="#ffe2d3" />
      <path d="M982 845v14M992 846v14M972 853v-6q0-3 4-3h13q3 0 3 4" stroke="#cfbe1d" strokeWidth="1.800" />
      <rect x="1014" y="823" width="20" height="34" rx="5" fill="url(#shell)" />
      <path d="M1018 857v5M1030 857v5" stroke="#d8c61f" strokeWidth="2" />
      <path d="M1084 846h26v16h-26z" fill="#f6dacf" />
      <circle cx="1096" cy="844" r="14.500" fill="url(#ball)" />
      <Pump x={900} y={853} />
      <Pump x={932} y={854} />
      <Pump x={973} y={854} />

      {/* steel frame */}
      <path d="M864 728h282" stroke="#b9c9cc" strokeWidth="2.500" />
      <path d="M875 730h271M875 797h271" stroke="#3fe4fb" strokeWidth="2.400" />
      <path d="M864 795.500h282" stroke="#b9c9cc" />
      <path d="M870 861.500h281" stroke="#efd91c" strokeWidth="2" />
      <path d="M875 863.500h271" stroke="#c8c8b0" strokeWidth="1.500" />
      <path d="M877 728v136M944.500 728v136M1010.500 728v136M1144.500 728v136" stroke="#3fe4fb" strokeWidth="3.400" />
      <path d="M1077.500 728v136" stroke="#3fe4fb" strokeWidth="2.800" />
      <path d="M880 731v127" stroke="#f2dc1e" strokeWidth="1.500" />
    </svg>
  );
}

function ViewWindow() {
  return (
    <main className="flex min-w-0 flex-1 flex-col border-t-2 border-l-2 border-[#707379] bg-[#c5daf8] font-['Liberation_Sans',sans-serif] text-sm text-[#141a30]">
      <div className="flex h-[30px] shrink-0 items-center pt-0.5 pl-[10px]">Navigate :</div>
      <div className="flex min-h-0 flex-1 pr-1.5">
        <div className="flex h-[498px] w-[35px] shrink-0 flex-col items-center justify-between pl-[5px]">
          {viewTools.map(([icon, label]) => (
            <button
              key={icon}
              type="button"
              aria-label={label}
              className={`flex size-6 items-center justify-center ${
                icon === 'pan' ? 'border-2 border-[#3a3a9c] bg-[#ffc476]' : ''
              }`}
            >
              <Icon name={icon} size={icon === 'pan' ? 'sm' : 'md'} />
            </button>
          ))}
        </div>
        <div className="min-w-0 flex-1 border-r border-b border-[#8a97ab] bg-black">
          <PlantModel />
        </div>
      </div>
      <div className="flex h-[23px] shrink-0 items-center border-b-2 border-[#e8edf5] pr-2 pb-1.5 pl-[37px]">
        <span className="w-[120px]">s</span>
        <span className="w-[90px]">Parallel</span>
        <span className="w-[60px]">Model</span>
        <span>Pan</span>
      </div>
    </main>
  );
}

type TaskProps = {
  label: string;
  state?: 'active' | 'alert' | 'stacked';
  children: ReactNode;
};

function Task({ label, state, children }: TaskProps) {
  const tone = state === 'active' ? 'bg-[#eaf4f8]' : state === 'alert' ? 'bg-[#f8b17c]' : '';
  return (
    <button type="button" aria-label={label} className={`flex w-[62px] flex-col items-center ${tone}`}>
      <svg viewBox="0 0 30 30" className="mt-2.5 size-[30px]" aria-hidden="true">{children}</svg>
      {state === 'active' && <span className="mt-auto h-[3px] w-full bg-[#2b93c9]" />}
      {state === 'alert' && <span className="mt-auto h-[3px] w-full bg-[#ff7200]" />}
      {state === 'stacked' && (
        <span className="mt-auto flex h-[3px] w-[51px]">
          <span className="flex-1 bg-[#2b93c9]" />
          <span className="w-2.5 bg-[#7cbedd]" />
        </span>
      )}
      {!state && <span className="mt-auto h-[3px] w-[51px] bg-[#2b93c9]" />}
    </button>
  );
}

function Taskbar() {
  return (
    <footer className="flex h-[50px] shrink-0 bg-linear-to-r from-[#d0e7ee] via-[#d2e5ec] to-[#d8dcea] text-black">
      <button type="button" aria-label="Start" className="flex w-[60px] items-center justify-center">
        <svg viewBox="0 0 20 20" className="size-5">
          <path d="M0 3l8-1.200V9.500H0zM9 1.600L20 0v9.500H9zM0 10.500h8v7.700L0 17zM9 10.500h11V20L9 18.400z" fill="#000" />
        </svg>
      </button>
      <button type="button" aria-label="Search" className="flex w-[60px] items-center justify-center">
        <svg viewBox="0 0 20 20" className="size-5"><circle cx="10" cy="10" r="8.500" fill="none" stroke="#000" strokeWidth="2.400" /></svg>
      </button>
      <button type="button" aria-label="Task view" className="mr-[3px] flex w-[60px] items-center justify-center">
        <svg viewBox="0 0 20 20" className="size-5" fill="none" stroke="#000" strokeWidth="1.300">
          <path d="M1 5h11v10H1zM.5 0v2.500h12V0M.5 20v-2.500h12V20M18 0v4M18 12v8" />
          <path d="M16.500 6h3v3h-3z" fill="#000" />
        </svg>
      </button>
      <Task label="Microsoft Edge">
        <defs>
          <linearGradient id="edge" x1="0" y1="0" x2="1" y2=".6">
            <stop offset="0" stopColor="#35b6ea" />
            <stop offset=".6" stopColor="#2bc3c4" />
            <stop offset="1" stopColor="#6bd552" />
          </linearGradient>
        </defs>
        <circle cx="15" cy="15" r="15" fill="#1464b4" />
        <path d="M0 14C1 5 7 0 15 0c9 0 15 6 15 12 0 5-4 8-9 8-3 0-4-1-4-2 0-1 2-1 2-5s-4-6-8-6C6 7 2 10 0 14z" fill="url(#edge)" />
        <path d="M11 14c-3 5 0 13 8 13 4 0 7-1 10-5-5 3-15 2-15-5 0-2 1-3 3-4-2-2-5-1-6 1z" fill="#0f4d92" />
        <path d="M17 13c-5 3-3 9 4 10 3 0 6-1 8-2l1-2c-3 2-9 2-12 0-2-1-1-3 0-4z" fill="#d0e7ee" />
      </Task>
      <Task label="File Explorer" state="stacked">
        <path d="M1 4h11l2 3H1z" fill="#e5a312" />
        <path d="M1 7h28v19H1z" fill="#ffd568" />
        <path d="M6 16h18v10h-4v-5H10v5H6z" fill="#3593d3" />
      </Task>
      <Task label="Music">
        <circle cx="15" cy="15" r="14.500" fill="#ffdc00" />
        <path d="M11 5l8-3c-1 2 0 3 3 4l-5 3 3 10" fill="none" stroke="#1fae63" strokeWidth="2.600" />
        <circle cx="16" cy="20" r="5" fill="#1fae63" />
      </Task>
      <Task label="Word" state="stacked">
        <path d="M8 1h21v7H8z" fill="#41a5ee" />
        <path d="M8 8h21v7H8z" fill="#2b7cd3" />
        <path d="M8 15h21v7H8z" fill="#185abd" />
        <path d="M8 22h21v7H8z" fill="#103f91" />
        <rect x="0" y="7" width="15" height="16" rx="1.500" fill="#185abd" />
        <text x="7.500" y="19.500" fontSize="12" fontWeight="bold" textAnchor="middle" fill="#fff" fontFamily="Open Sans">W</text>
      </Task>
      <Task label="Excel" state="stacked">
        <path d="M8 1h11v7H8z" fill="#21a366" />
        <path d="M19 1h10v7H19z" fill="#33c481" />
        <path d="M8 8h11v14H8z" fill="#107c41" />
        <path d="M19 8h10v7H19z" fill="#21a366" />
        <path d="M19 15h10v7H19z" fill="#107c41" />
        <path d="M8 22h21v7H8z" fill="#185c37" />
        <rect x="0" y="7" width="15" height="16" rx="1.500" fill="#107c41" />
        <text x="7.500" y="19.500" fontSize="12" fontWeight="bold" textAnchor="middle" fill="#fff" fontFamily="Open Sans">X</text>
      </Task>
      <Task label="Chat" state="alert">
        <circle cx="15" cy="15" r="15" fill="#a3a8b6" />
        <path d="M7 10C8 2 17-1 23 4c4 3 6 10 4 16l-4 2-4-10-9 1-2 4z" fill="#23262e" />
        <path d="M10 12l9 0 3 8-4 4-5-1-2-2-1-3z" fill="#d9c4be" />
        <path d="M9 29c2-4 6-5 9-6l6-3 3 3c-4 6-11 9-18 6z" fill="#dfe3ec" />
      </Task>
      <Task label="Command Prompt">
        <rect x="1" y="4" width="27" height="22" fill="#0c0c0c" stroke="#9a9a9a" />
        <path d="M1 4h27v3H1z" fill="#c9c9c9" />
        <text x="3" y="14" fontSize="6" fill="#ddd" fontFamily="Liberation Mono">C:\_</text>
      </Task>
      <Task label="AVEVA PDMS" state="active">
        <rect x="1" y="1" width="28" height="28" rx="2" fill="#f2f9fc" stroke="#4c87a8" strokeWidth="2" />
        <path d="M6 23L14 6h2l7 17M4 17h12l9-3" fill="none" stroke="#3a86ad" strokeWidth="3" />
      </Task>
      <Task label="Vessel design">
        <path d="M15 0v30" stroke="#e01010" strokeWidth="2.500" />
        <rect x="10" y="2" width="11" height="26" rx="5" fill="#0a7d14" />
        <path d="M8 10h15M20 13h3M7 18h3" stroke="#f01010" strokeWidth="2.200" />
      </Task>
      <Task label="P&ID">
        <path d="M0 0h30v30H0z" fill="#b5802f" />
        <path d="M2 13a9 9 0 0 1 18-2M11 2v11M3 8h15M7 13c0-6 2-10 4-11 3 2 4 6 4 9M0 17l20-10" fill="none" stroke="#3a2508" strokeWidth="1.300" />
        <text x="15" y="28" fontSize="12" fontWeight="bold" textAnchor="middle" fill="#2a1a04" fontFamily="Liberation Sans">P&amp;ID</text>
      </Task>

      <div className="ml-auto flex items-center">
        <button type="button" aria-label="Battery 98%" className="flex w-[60px] items-center">
          <svg viewBox="0 0 60 24" className="h-6 w-[60px]">
            <path d="M3 1v6M10 1v6" stroke="#888" strokeWidth="3.500" />
            <path d="M3 1v6M10 1v6" stroke="#fff" strokeWidth="2" />
            <path d="M1 6h12v5q-1 4-4 5v7H6v-7q-4-1-5-5z" fill="#fff" stroke="#888" />
            <rect x="15" y="1" width="41" height="22" rx="2" fill="#fff" stroke="#888" strokeWidth="1.500" />
            <path d="M56 7h3v10h-3z" fill="#fff" stroke="#888" />
            <rect x="17.500" y="3.500" width="36" height="17" fill="#159a48" stroke="#777" />
            <text x="35.500" y="16" fontSize="11" textAnchor="middle" fill="#fff" fontFamily="Open Sans">98%</text>
          </svg>
        </button>
        <button type="button" aria-label="Show hidden icons" className="flex w-[30px] justify-center">
          <svg viewBox="0 0 16 10" className="h-2.5 w-4"><path d="M0 9l8-8 8 8" fill="none" stroke="#111" strokeWidth="1.600" /></svg>
        </button>
        <button type="button" aria-label="Sound app" className="flex w-[30px] justify-center">
          <svg viewBox="0 0 20 20" className="size-5" fill="none" stroke="#fff" strokeWidth="1.500">
            <circle cx="10" cy="10" r="10" fill="#ff9f4f" stroke="none" />
            <path d="M3 8v4h2l4 3V5L5 8zM12 7q2 3 0 6M14.500 5q3 5 0 10" />
          </svg>
        </button>
        <button type="button" aria-label="Power" className="flex w-[30px] justify-center">
          <svg viewBox="0 0 20 14" className="h-3.5 w-5">
            <path d="M5 3h13v9H4V8" fill="none" stroke="#000" />
            <path d="M6 4.500h11v6H6zM18 5h2v4h-2zM0 2h5v3q-1 2-2 2t-3-2zM1 0h1v2H1zM3.500 0h1v2h-1z" fill="#000" />
            <path d="M2.500 6v6H5" fill="none" stroke="#000" />
          </svg>
        </button>
        <button type="button" aria-label="Network" className="flex w-[30px] justify-center">
          <svg viewBox="0 0 16 16" className="size-4" fill="none" stroke="#333" strokeWidth="1.300">
            <path d="M1 15C1 7 7 1 15 1M5 15C5 9 9 5 15 5M9 15c0-3 3-6 6-6" />
            <circle cx="13.500" cy="13.500" r="1.800" fill="#111" stroke="none" />
          </svg>
        </button>
        <button type="button" aria-label="Volume" className="flex w-[29px] justify-center">
          <svg viewBox="0 0 20 16" className="h-4 w-5" fill="none" stroke="#111" strokeWidth="1.200">
            <path d="M1 5v6h3l4 4V1L4 5zM11 6q1.500 2 0 4" />
            <path d="M14 4q3 4 0 8M17 2q4 6 0 12" stroke="#999" />
          </svg>
        </button>
        <button type="button" className="w-[30px] text-center font-['Noto_Sans_CJK_SC',sans-serif] text-[17px] leading-6">英</button>
        <button type="button" className="w-[90px] text-center text-base leading-[23px]">
          <time>22:21<br />2021/8/5</time>
        </button>
        <button type="button" aria-label="Notifications" className="ml-4 flex w-[47px]">
          <svg viewBox="0 0 32 32" className="size-8">
            <path d="M2 3h20v16h-8l-4 4v-4H2z" fill="#000" />
            <path d="M5 7h14M5 11h14M5 15h9" stroke="#fff" strokeWidth="1.300" />
            <circle cx="21" cy="22" r="9.500" fill="#c9ccd2" fillOpacity=".9" stroke="#888" />
            <text x="21" y="27" fontSize="14" textAnchor="middle" fill="#000" fontFamily="Open Sans">1</text>
          </svg>
        </button>
        <div className="h-full w-[6px] border-l border-[#a8aebb]" />
      </div>
    </footer>
  );
}

export default function App() {
  return (
    <div className="relative flex h-screen flex-col overflow-hidden bg-[#bfdbff] font-['Open_Sans',sans-serif]">
      <TitleBar />
      <MenuBar />
      <Toolbars />
      <div className="flex min-h-0 flex-1">
        <Explorer />
        <div className="w-[7px] shrink-0 border-x-2 border-[#2b3a9e] bg-[#cfe0fa]" />
        <ViewWindow />
      </div>
      <div className="h-7 shrink-0 border border-t-2 border-[#6d92c8] bg-linear-to-b from-[#d5e5fb] via-[#b4d1f5] via-40% to-[#d3e4fb]" />
      <Taskbar />

      {/* floating level gauge on the window edge */}
      <div className="absolute top-[157px] right-0 flex h-16 w-[11px] items-end rounded-md border-2 border-[#6b7380] bg-[#dbe9fb] p-px">
        <div className="h-[22px] w-full rounded-sm bg-[#ff7f27]" />
      </div>
    </div>
  );
}
